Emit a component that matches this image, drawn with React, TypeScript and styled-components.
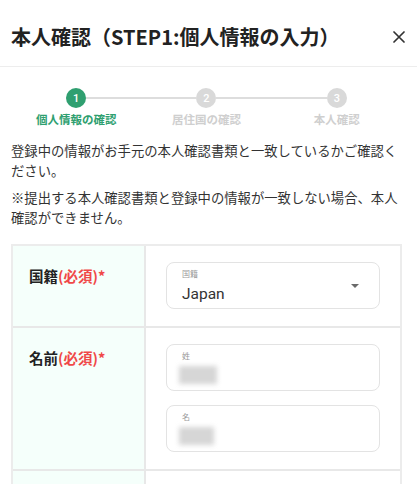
import React from "react";
import styled, { createGlobalStyle } from "styled-components";

const Global = createGlobalStyle`
  html, body { margin: 0; padding: 0; background: #fff; }
  body { font-family: "Noto Sans CJK JP", "Noto Sans", sans-serif; color: #333; }
  * { box-sizing: border-box; }
`;

const Page = styled.div`
  width: 417px;
  height: 484px;
  overflow: hidden;
  background: #fff;
`;

const Header = styled.header`
  display: flex;
  align-items: center;
  justify-content: space-between;
  height: 67px;
  padding: 8px 10px 0 11px;
  border-bottom: 1px solid #ededed;
`;

const Title = styled.h1`
  margin: 0;
  font-size: 20px;
  line-height: 30px;
  font-weight: 700;
  color: #222;
`;

const Close = styled.button`
  display: flex;
  align-items: center;
  justify-content: center;
  width: 16px;
  height: 16px;
  padding: 0;
  border: none;
  background: none;
`;

const Stepper = styled.ol`
  display: grid;
  grid-template-columns: repeat(3, 1fr);
  margin: 0;
  padding: 21px 15px 0 11px;
  list-style: none;
`;

const Step = styled.li<{ $last?: boolean }>`
  position: relative;
  display: flex;
  flex-direction: column;
  align-items: center;
  gap: 3px;

  &::after {
    content: "";
    display: ${(p) => (p.$last ? "none" : "block")};
    position: absolute;
    top: 9px;
    left: calc(50% + 10px);
    width: calc(100% - 20px);
    height: 2px;
    background: #dddddd;
  }
`;

const Dot = styled.span<{ $active?: boolean }>`
  display: flex;
  align-items: center;
  justify-content: center;
  width: 20px;
  height: 20px;
  border-radius: 50%;
  background: ${(p) => (p.$active ? "#2f9f70" : "#d9d9d9")};
  color: #fff;
  font-family: "Roboto", sans-serif;
  font-size: 11px;
  font-weight: 500;
`;

const StepLabel = styled.span<{ $active?: boolean }>`
  font-size: 11.5px;
  line-height: 16px;
  font-weight: 700;
  color: ${(p) => (p.$active ? "#2f9f70" : "#cfcfcf")};
`;

const Intro = styled.div`
  padding: 14px 15px 0 11px;
`;

const Para = styled.p`
  margin: 0;
  font-size: 13.33px;
  line-height: 20px;
  color: #333;

  & + & {
    margin-top: 7px;
  }
`;

const Table = styled.div`
  margin: 16px 15px 0 11px;
  border: 2px solid #ececec;
  border-bottom: none;
`;

const Row = styled.div`
  display: grid;
  grid-template-columns: 133px 1fr;
  border-bottom: 2px solid #e8e8e8;
`;

const LabelCell = styled.div`
  padding: 19px 16px;
  background: #f5fffb;
  border-right: 2px solid #e8e8e8;
  font-size: 14.5px;
  line-height: 22px;
  font-weight: 700;
  color: #222;
`;

const Required = styled.span`
  color: #f04848;
`;

const FieldCell = styled.div`
  display: flex;
  flex-direction: column;
  gap: 14px;
  min-height: 60px;
  padding: 16px 20px 17px 20px;
`;

const FieldBox = styled.div`
  display: flex;
  align-items: center;
  height: 47px;
  padding: 0 20px 0 15px;
  border: 1px solid #e3e3e3;
  border-radius: 8px;
  background: #fff;
`;

const FieldInner = styled.div`
  display: flex;
  flex-direction: column;
  flex: 1;
  align-self: stretch;
  padding-top: 5px;
`;

const FieldLabel = styled.span`
  font-size: 8px;
  line-height: 12px;
  color: #9a9a9a;
`;

const FieldValue = styled.span`
  margin-top: 4px;
  font-family: "Roboto", sans-serif;
  font-size: 15.5px;
  line-height: 20px;
  color: #333;
`;

const Blurred = styled.div<{ $w: number }>`
  margin: 4px 0 0 -3px;
  width: ${(p) => p.$w}px;
  height: 18px;
  background: #d6d6d6;
  filter: blur(2.5px);
`;

const Arrow = styled.span`
  width: 0;
  height: 0;
  border-left: 4.5px solid transparent;
  border-right: 4.5px solid transparent;
  border-top: 4.5px solid #6a6a6a;
`;

export default function App() {
  return (
    <Page>
      <Global />
      <Header>
        <Title>本人確認（STEP1:個人情報の入力）</Title>
        <Close aria-label="close">
          <svg width="12" height="12" viewBox="0 0 12 12">
            <path d="M1 1 L11 11 M11 1 L1 11" stroke="#333" strokeWidth="1.7" strokeLinecap="round" />
          </svg>
        </Close>
      </Header>
      <Stepper>
        <Step>
          <Dot $active>1</Dot>
          <StepLabel $active>個人情報の確認</StepLabel>
        </Step>
        <Step>
          <Dot>2</Dot>
          <StepLabel>居住国の確認</StepLabel>
        </Step>
        <Step $last>
          <Dot>3</Dot>
          <StepLabel>本人確認</StepLabel>
        </Step>
      </Stepper>
      <Intro>
        <Para>登録中の情報がお手元の本人確認書類と一致しているかご確認ください。</Para>
        <Para>※提出する本人確認書類と登録中の情報が一致しない場合、本人確認ができません。</Para>
      </Intro>
      <Table>
        <Row>
          <LabelCell>
            国籍<Required>(必須)*</Required>
          </LabelCell>
          <FieldCell>
            <FieldBox>
              <FieldInner>
                <FieldLabel>国籍</FieldLabel>
                <FieldValue>Japan</FieldValue>
              </FieldInner>
              <Arrow />
            </FieldBox>
          </FieldCell>
        </Row>
        <Row>
          <LabelCell>
            名前<Required>(必須)*</Required>
          </LabelCell>
          <FieldCell>
            <FieldBox>
              <FieldInner>
                <FieldLabel>姓</FieldLabel>
                <Blurred $w={38} />
              </FieldInner>
            </FieldBox>
            <FieldBox>
              <FieldInner>
                <FieldLabel>名</FieldLabel>
                <Blurred $w={35} />
              </FieldInner>
            </FieldBox>
          </FieldCell>
        </Row>
        <Row>
          <LabelCell />
          <FieldCell />
        </Row>
      </Table>
    </Page>
  );
}
